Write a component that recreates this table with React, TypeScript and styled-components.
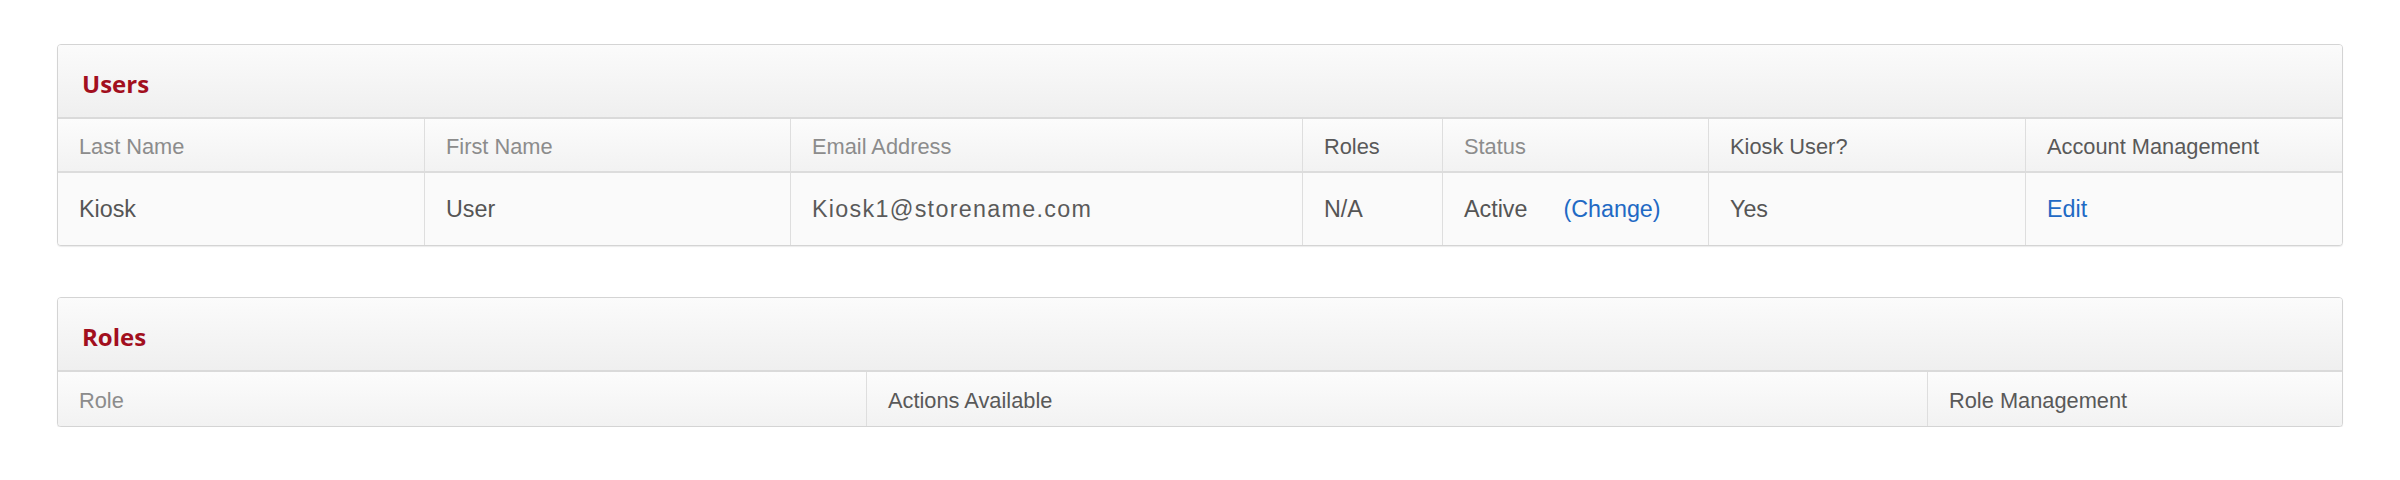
import React from "react";
import styled, { createGlobalStyle } from "styled-components";

const GlobalStyle = createGlobalStyle`
  html, body {
    margin: 0;
    padding: 0;
    background: #ffffff;
  }
  body {
    font-family: "Liberation Sans", Arial, sans-serif;
  }
`;

const Page = styled.div`
  width: 2400px;
  box-sizing: border-box;
  padding: 44px 57px 0 57px;
  display: flex;
  flex-direction: column;
  gap: 51px;
`;

const Panel = styled.section`
  border: 1px solid #d4d4d4;
  border-radius: 4px;
  background: #fafafa;
  box-shadow: 0 1px 1px rgba(0, 0, 0, 0.08);
  overflow: hidden;
`;

const PanelHeader = styled.header`
  height: 74px;
  box-sizing: border-box;
  padding: 4px 22px 0 24px;
  display: flex;
  align-items: center;
  background: linear-gradient(to bottom, #fbfbfb 0%, #efefef 100%);
  border-bottom: 2px solid #dadada;
`;

const Title = styled.h2`
  margin: 0;
  font-family: "Open Sans", "Liberation Sans", sans-serif;
  font-weight: 700;
  font-size: 24px;
  color: #a20f1e;
`;

const Row = styled.div<{ $cols: string; $head?: boolean; $last?: boolean }>`
  display: grid;
  grid-template-columns: ${(p) => p.$cols};
  height: ${(p) => (p.$head ? (p.$last ? "54px" : "52px") : "72px")};
  background: ${(p) =>
    p.$head ? "linear-gradient(to bottom, #fcfcfc 0%, #f2f2f2 100%)" : "#fafafa"};
  border-bottom: ${(p) => (p.$last ? "none" : "2px solid #dcdcdc")};
`;

const Cell = styled.div<{ $first?: boolean }>`
  display: flex;
  align-items: center;
  box-sizing: border-box;
  padding: 0 21px;
  border-left: ${(p) => (p.$first ? "none" : "1px solid #dedede")};
  min-width: 0;
  white-space: nowrap;
`;

const HeadCell = styled(Cell)<{ $dim?: boolean }>`
  padding-top: 3px;
  font-size: 21.8px;
  color: ${(p) => (p.$dim ? "#8c8c8c" : "#595959")};
`;

const BodyCell = styled(Cell)`
  font-size: 23.3px;
  color: #555555;
`;

const Email = styled.span`
  letter-spacing: 1.3px;
  color: #5a5a5a;
`;

const Link = styled.a<{ $gap?: number }>`
  color: #2169c4;
  text-decoration: none;
  margin-left: ${(p) => (p.$gap ? `${p.$gap}px` : "0")};
  cursor: pointer;
`;

const usersCols = "366px 366px 512px 140px 266px 317px 317px";
const rolesCols = "808px 1061px 415px";

const userHeads: { label: string; dim: boolean }[] = [
  { label: "Last Name", dim: true },
  { label: "First Name", dim: true },
  { label: "Email Address", dim: true },
  { label: "Roles", dim: false },
  { label: "Status", dim: true },
  { label: "Kiosk User?", dim: false },
  { label: "Account Management", dim: false },
];

const roleHeads: { label: string; dim: boolean }[] = [
  { label: "Role", dim: true },
  { label: "Actions Available", dim: false },
  { label: "Role Management", dim: false },
];

export default function App() {
  return (
    <>
      <GlobalStyle />
      <Page>
        <Panel>
          <PanelHeader>
            <Title>Users</Title>
          </PanelHeader>
          <Row $cols={usersCols} $head>
            {userHeads.map((h, i) => (
              <HeadCell key={h.label} $first={i === 0} $dim={h.dim}>
                {h.label}
              </HeadCell>
            ))}
          </Row>
          <Row $cols={usersCols} $last>
            <BodyCell $first>Kiosk</BodyCell>
            <BodyCell>User</BodyCell>
            <BodyCell>
              <Email>Kiosk1@storename.com</Email>
            </BodyCell>
            <BodyCell>N/A</BodyCell>
            <BodyCell>
              Active
              <Link $gap={36}>(Change)</Link>
            </BodyCell>
            <BodyCell>Yes</BodyCell>
            <BodyCell>
              <Link>Edit</Link>
            </BodyCell>
          </Row>
        </Panel>
        <Panel>
          <PanelHeader>
            <Title>Roles</Title>
          </PanelHeader>
          <Row $cols={rolesCols} $head $last>
            {roleHeads.map((h, i) => (
              <HeadCell key={h.label} $first={i === 0} $dim={h.dim}>
                {h.label}
              </HeadCell>
            ))}
          </Row>
        </Panel>
      </Page>
    </>
  );
}
